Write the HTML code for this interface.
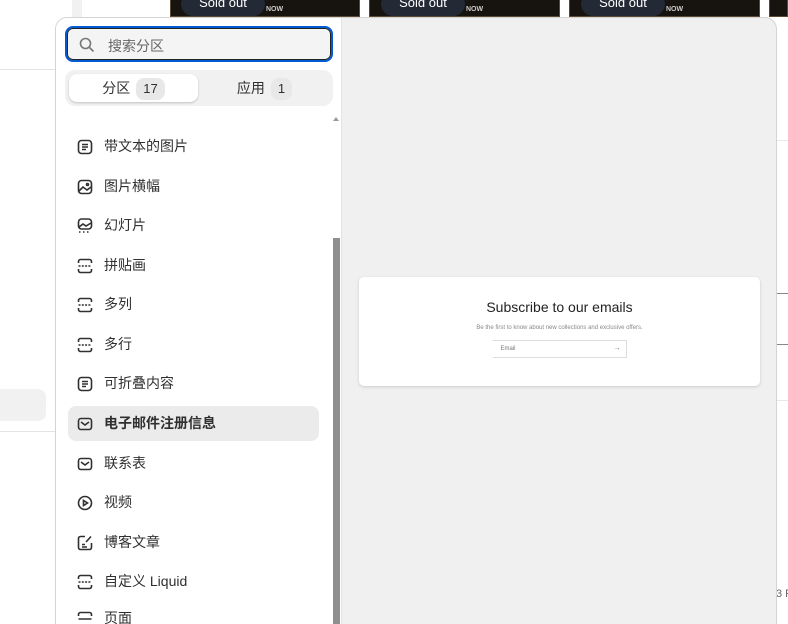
<!DOCTYPE html>
<html><head><meta charset="utf-8"><style>
*{box-sizing:border-box;margin:0;padding:0}
html,body{width:788px;height:624px;overflow:hidden}
body{background:#fff;font-family:"Liberation Sans","Noto Sans CJK SC",sans-serif;position:relative}
.abs{position:absolute}
.img{top:0;height:17px;background:#17130f;border:1px solid #5a4a32;border-top:none}
.pill{top:-8px;height:24px;background:#232a36;border-radius:12px;color:#fff;font-size:13px;line-height:22px;text-align:center;width:84px}
.now{top:6px;font-size:7px;color:#ccc;font-weight:bold}
.pop{left:55px;top:17px;width:722px;height:607px;border-radius:12px 12px 0 0;background:#f0f0f0;border:1px solid #d4d4d4;border-bottom:none;overflow:hidden}
.left{position:absolute;left:0;top:0;width:286px;height:100%;background:#fff;border-right:1px solid #e3e3e3}
.search{position:absolute;left:9px;top:8px;width:268px;height:36px;border:2px solid #005bd3;border-radius:8px;background:#f4f4f4;box-shadow:inset 0 0 0 1px #222}
.search span{position:absolute;left:41px;top:8px;font-size:14px;color:#666}
.tabs{position:absolute;left:9px;top:52px;width:268px;height:36px;background:#f1f1f1;border-radius:10px}
.tab{position:absolute;top:4px;height:28px;width:129px;border-radius:8px;font-size:14px;color:#303030;text-align:center;line-height:28px}
.tab b{display:inline-block;font-weight:normal;background:#e8e8e8;border-radius:8px;padding:0 7px;margin-left:6px;font-size:13px;line-height:22px}
.item{position:absolute;left:12px;width:251px;height:35px;border-radius:8px;font-size:14px;color:#303030;line-height:35px;padding-left:36px}
.item svg{position:absolute;left:9px;top:10px}
.item.sel{background:#ebebeb;font-weight:bold}
.card{position:absolute;left:303px;top:259px;width:401px;height:109px;background:#fff;border-radius:5px;box-shadow:0 1px 3px rgba(0,0,0,.15);text-align:center}
</style></head><body>
<div class="abs" style="left:0;top:69px;width:55px;height:1px;background:#e3e3e3"></div>
<div class="abs" style="left:0;top:431px;width:55px;height:1px;background:#e3e3e3"></div>
<div class="abs" style="left:0;top:389px;width:46px;height:32px;background:#f1f1f1;border-radius:0 8px 8px 0"></div>
<div class="abs" style="left:72px;top:0;width:10px;height:20px;background:#f1f1f1"></div>
<div class="abs img" style="left:170px;width:190px"></div>
<div class="abs img" style="left:369px;width:191px"></div>
<div class="abs img" style="left:569px;width:191px"></div>
<div class="abs img" style="left:769px;width:19px"></div>
<div class="abs pill" style="left:181px">Sold out</div>
<div class="abs pill" style="left:381px">Sold out</div>
<div class="abs pill" style="left:581px">Sold out</div>
<div class="abs now" style="left:266px">NOW</div>
<div class="abs now" style="left:466px">NOW</div>
<div class="abs now" style="left:666px">NOW</div>
<div class="abs" style="left:777px;top:140px;width:11px;height:1px;background:#e8e8e8"></div>
<div class="abs" style="left:777px;top:293px;width:11px;height:1px;background:#888"></div>
<div class="abs" style="left:777px;top:344px;width:11px;height:1px;background:#888"></div>
<div class="abs" style="left:777px;top:400px;width:11px;height:1px;background:#e8e8e8"></div>
<div class="abs" style="left:776px;top:588px;width:12px;overflow:hidden;font-size:11px;color:#666;white-space:nowrap">3 F</div>

<div class="abs pop">
 <div class="left">
  <div class="search"><svg class="abs" style="left:12px;top:9px" width="16" height="16" viewBox="0 0 16 16" fill="none" stroke="#777" stroke-width="1.6"><circle cx="6.5" cy="6.5" r="5"/><path d="M10.5 10.5l4 4"/></svg><span>搜索分区</span></div>
  <div class="tabs">
   <div class="tab" style="left:4px;background:#fff;box-shadow:0 1px 2px rgba(0,0,0,.2)">分区<b>17</b></div>
   <div class="tab" style="left:135px">应用<b>1</b></div>
  </div>
  <div class="abs" style="left:277px;top:99px;width:0;height:0;border:3px solid transparent;border-bottom:4px solid #999;border-top:none"></div>
  <div class="abs" style="left:277px;top:220px;width:7px;height:400px;background:#8f8f8f"></div>
  <div class="item" style="top:111px"><svg width="16" height="16" viewBox="0 0 16 16" fill="none" stroke="#303030" stroke-width="1.6"><rect x="1.5" y="1.5" width="13" height="13" rx="3"/><path d="M5 5.5h6M5 8h6M5 10.5h4"/></svg>带文本的图片</div>
  <div class="item" style="top:151px"><svg width="16" height="16" viewBox="0 0 16 16" fill="none" stroke="#303030" stroke-width="1.6"><rect x="1.5" y="1.5" width="13" height="13" rx="3"/><path d="M2 12l4-4 4 3 4-3"/><circle cx="10.5" cy="5.5" r="1"/></svg>图片横幅</div>
  <div class="item" style="top:190px"><svg width="16" height="16" viewBox="0 0 16 16" fill="none" stroke="#303030" stroke-width="1.6"><rect x="1.5" y="1" width="13" height="10" rx="3"/><path d="M2 9l4-3 3 2 5-3"/><path d="M2 14h2M6 14h2M10 14h2" stroke-dasharray="1.5 1"/></svg>幻灯片</div>
  <div class="item" style="top:230px"><svg width="16" height="16" viewBox="0 0 16 16" fill="none" stroke="#303030" stroke-width="1.6"><path d="M1.5 5V3.5a2 2 0 012-2h9a2 2 0 012 2V5M1.5 11v1.5a2 2 0 002 2h9a2 2 0 002-2V11"/><path d="M1.5 8h13" stroke-dasharray="2 1.3"/></svg>拼贴画</div>
  <div class="item" style="top:269px"><svg width="16" height="16" viewBox="0 0 16 16" fill="none" stroke="#303030" stroke-width="1.6"><path d="M1.5 5V3.5a2 2 0 012-2h9a2 2 0 012 2V5M1.5 11v1.5a2 2 0 002 2h9a2 2 0 002-2V11"/><path d="M1.5 8h13" stroke-dasharray="2 1.3"/></svg>多列</div>
  <div class="item" style="top:309px"><svg width="16" height="16" viewBox="0 0 16 16" fill="none" stroke="#303030" stroke-width="1.6"><path d="M1.5 5V3.5a2 2 0 012-2h9a2 2 0 012 2V5M1.5 11v1.5a2 2 0 002 2h9a2 2 0 002-2V11"/><path d="M1.5 8h13" stroke-dasharray="2 1.3"/></svg>多行</div>
  <div class="item" style="top:348px"><svg width="16" height="16" viewBox="0 0 16 16" fill="none" stroke="#303030" stroke-width="1.6"><rect x="1.5" y="1.5" width="13" height="13" rx="3"/><path d="M5 5.5h6M5 8h6M5 10.5h4"/></svg>可折叠内容</div>
  <div class="item sel" style="top:388px"><svg width="16" height="16" viewBox="0 0 16 16" fill="none" stroke="#303030" stroke-width="1.6"><rect x="1.5" y="2.5" width="13" height="11" rx="2.5"/><path d="M4 6l4 3 4-3"/></svg>电子邮件注册信息</div>
  <div class="item" style="top:428px"><svg width="16" height="16" viewBox="0 0 16 16" fill="none" stroke="#303030" stroke-width="1.6"><rect x="1.5" y="2.5" width="13" height="11" rx="2.5"/><path d="M4 6l4 3 4-3"/></svg>联系表</div>
  <div class="item" style="top:467px"><svg width="16" height="16" viewBox="0 0 16 16" fill="none" stroke="#303030" stroke-width="1.6"><circle cx="8" cy="8" r="6.5"/><path d="M6.5 5.5v5l4-2.5z"/></svg>视频</div>
  <div class="item" style="top:507px"><svg width="16" height="16" viewBox="0 0 16 16" fill="none" stroke="#303030" stroke-width="1.6"><path d="M8 1.5H3.5a2 2 0 00-2 2v9a2 2 0 002 2h9a2 2 0 002-2V8M5 9.5h3M5 12h5M9 7l5-5.5"/></svg>博客文章</div>
  <div class="item" style="top:546px"><svg width="16" height="16" viewBox="0 0 16 16" fill="none" stroke="#303030" stroke-width="1.6"><path d="M1.5 5V3.5a2 2 0 012-2h9a2 2 0 012 2V5M1.5 11v1.5a2 2 0 002 2h9a2 2 0 002-2V11"/><path d="M1.5 8h13" stroke-dasharray="2 1.3"/></svg>自定义 Liquid</div>
  <div class="item" style="top:583px;height:24px;overflow:hidden"><svg width="16" height="16" viewBox="0 0 16 16" fill="none" stroke="#303030" stroke-width="1.6"><path d="M1.5 5V3.5a2 2 0 012-2h9a2 2 0 012 2V5M1.5 8h13"/></svg>页面</div>
 </div>
 <div class="card">
  <div style="margin-top:22px;font-size:14px;color:#222">Subscribe to our emails</div>
  <div style="margin-top:10px;font-size:6px;color:#888">Be the first to know about new collections and exclusive offers.</div>
  <div style="position:relative;margin:9px auto 0;width:134px;height:18px;border:1px solid #ddd;border-left:none;text-align:left;font-size:6px;color:#777;line-height:16px;padding-left:8px">Email<span style="position:absolute;right:5px;top:0;font-size:7px">→</span></div>
 </div>
</div>
</body></html>
